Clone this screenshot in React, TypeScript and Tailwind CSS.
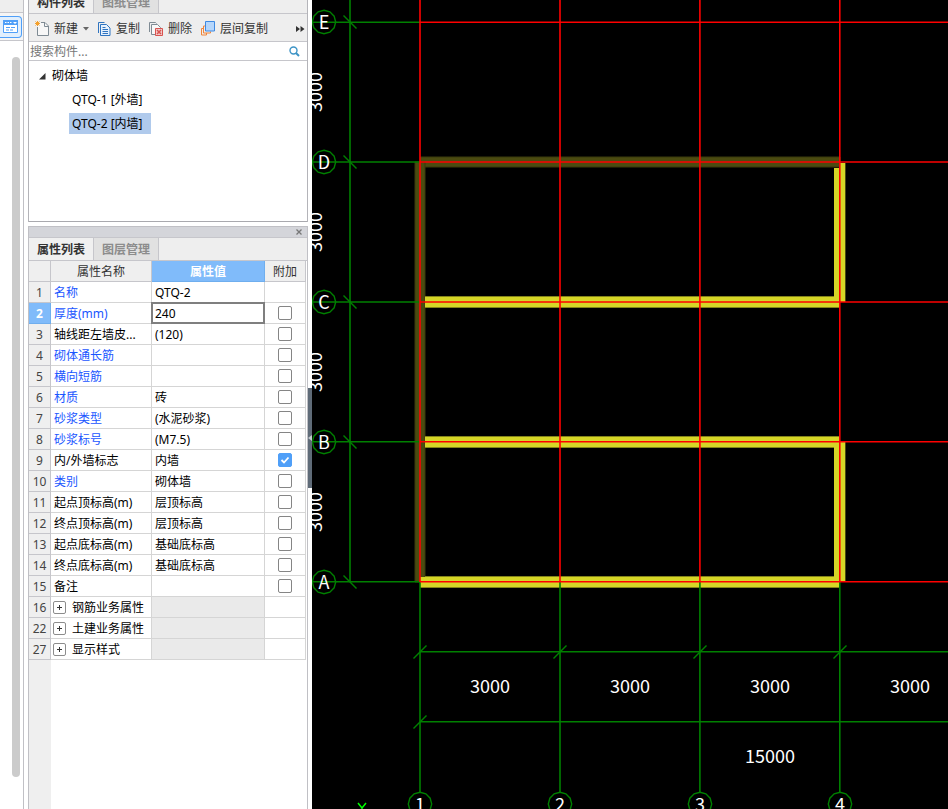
import { useState } from "react";

type Property = {
  no: number;
  name: string;
  value?: string;
  blue?: boolean;
  group?: boolean;
  check?: boolean;
};

const properties: Property[] = [
  { no: 1, name: "名称", value: "QTQ-2", blue: true },
  { no: 2, name: "厚度(mm)", value: "240", blue: true, check: true },
  { no: 3, name: "轴线距左墙皮...", value: "(120)", check: true },
  { no: 4, name: "砌体通长筋", blue: true, check: true },
  { no: 5, name: "横向短筋", blue: true, check: true },
  { no: 6, name: "材质", value: "砖", blue: true, check: true },
  { no: 7, name: "砂浆类型", value: "(水泥砂浆)", blue: true, check: true },
  { no: 8, name: "砂浆标号", value: "(M7.5)", blue: true, check: true },
  { no: 9, name: "内/外墙标志", value: "内墙", check: true },
  { no: 10, name: "类别", value: "砌体墙", blue: true, check: true },
  { no: 11, name: "起点顶标高(m)", value: "层顶标高", check: true },
  { no: 12, name: "终点顶标高(m)", value: "层顶标高", check: true },
  { no: 13, name: "起点底标高(m)", value: "基础底标高", check: true },
  { no: 14, name: "终点底标高(m)", value: "基础底标高", check: true },
  { no: 15, name: "备注", check: true },
  { no: 16, name: "钢筋业务属性", group: true },
  { no: 22, name: "土建业务属性", group: true },
  { no: 27, name: "显示样式", group: true },
];

function NewIcon() {
  return (
    <svg width="14" height="15" viewBox="0 0 14 15" fill="none">
      <path d="M6 1.5h4l3.500 3.500v9.500H2.500V6" fill="#f7f7f7" stroke="#7f8b94" />
      <path d="M9.500 1.500V5.500h4" stroke="#7f8b94" />
      <path d="M2.500 0v5M0 2.500h5M.5.5l4 4M4.500.5l-4 4" stroke="#f5a12c" />
    </svg>
  );
}

function CopyIcon() {
  return (
    <svg width="13" height="14" viewBox="0 0 13 14" fill="none">
      <path d="M.5 11V.5h6" stroke="#2f74c0" />
      <path d="M2.500 2.500h6l3.500 3.500v7.500H2.500z" fill="#e6f1fd" stroke="#2f74c0" />
      <path d="M4.500 5.500h3M4.500 7.500h5.500M4.500 9.500h5.500M4.500 11.500h5.500" stroke="#2f74c0" />
    </svg>
  );
}

function DeleteIcon() {
  return (
    <svg width="14" height="14" viewBox="0 0 14 14" fill="none">
      <path d="M.5 10V.5h6l1 1" stroke="#7f8b94" />
      <path d="M6 12.500H2.500v-10h6l3 3V7" stroke="#7f8b94" fill="#f7f7f7" />
      <path d="M6.500 6.500h7v7h-7z" fill="#f3c9c9" stroke="#d9534f" />
      <path d="M8 8l4 4M12 8l-4 4" stroke="#d9534f" strokeWidth="1.500" />
    </svg>
  );
}

function LayerCopyIcon() {
  return (
    <svg width="14" height="15" viewBox="0 0 14 15" fill="none">
      <path d="M2 7.500H.5v6.500h5v-2" stroke="#f0853a" />
      <path d="M4.500 5H2.500v7h7v-1.500" stroke="#f0853a" />
      <path d="M4.500.5h9v9.500h-9z" fill="#b5d6fb" stroke="#3f8ae2" />
    </svg>
  );
}

function Tabs({ tabs }: { tabs: string[] }) {
  return (
    <div className="flex h-[23px] w-full shrink-0 border-b border-[#c6c6cb] bg-[#eeeeee]">
      {tabs.map((tab, i) => (
        <button
          key={tab}
          className={
            i === 0
              ? "h-full border-r border-[#c6c6cb] bg-[#f0f0f0] px-2 pt-0.5 font-bold text-[#333]"
              : "h-full border-r border-[#c6c6cb] bg-[#e1e1e1] px-2 pt-0.5 font-bold text-[#8c8c8c]"
          }
        >
          {tab}
        </button>
      ))}
    </div>
  );
}

function Toolbar() {
  return (
    <div className="flex h-7 shrink-0 items-center gap-[9px] border-b border-[#c6c6cb] bg-[#eeeeee] pt-0.5 pr-0.5 pl-1.5 text-[#333]">
      <button className="flex items-center gap-[5px] whitespace-nowrap">
        <NewIcon />
        新建
        <svg width="6" height="4" viewBox="0 0 6 4">
          <path d="M0 0h6L3 3.500z" fill="#666" />
        </svg>
      </button>
      <button className="flex items-center gap-[5px] whitespace-nowrap">
        <CopyIcon />
        复制
      </button>
      <button className="flex items-center gap-[5px] whitespace-nowrap">
        <DeleteIcon />
        删除
      </button>
      <button className="flex items-center gap-[5px] whitespace-nowrap">
        <LayerCopyIcon />
        层间复制
      </button>
      <button aria-label="更多" className="ml-auto">
        <svg width="9" height="6" viewBox="0 0 9 6" fill="#333">
          <path d="M0 0l4 3-4 3zM4.500 0l4 3-4 3z" />
        </svg>
      </button>
    </div>
  );
}

function ComponentTree() {
  return (
    <div className="h-[161px] shrink-0 border-b border-[#a9a9ae] bg-white pt-0.5 text-black">
      <div className="flex h-6 items-center gap-1.5 pt-0.5 pl-[10px]">
        <svg width="7" height="7" viewBox="0 0 7 7">
          <path d="M6.500 0v6.500H0z" fill="#333" />
        </svg>
        砌体墙
      </div>
      <div className="flex h-6 items-center pl-10">
        <button className="h-[21px] w-[82px] px-[3px] pt-0.5 text-left whitespace-nowrap">QTQ-1 [外墙]</button>
      </div>
      <div className="flex h-6 items-center pl-10">
        <button className="h-[21px] w-[82px] bg-[#b0caec] px-[3px] pt-0.5 text-left whitespace-nowrap">QTQ-2 [内墙]</button>
      </div>
    </div>
  );
}

function PropertyTable() {
  const [thickness, setThickness] = useState("240");
  const [checked, setChecked] = useState<number[]>([9]);

  const toggle = (no: number) =>
    setChecked((list) => (list.includes(no) ? list.filter((n) => n !== no) : [...list, no]));

  return (
    <table className="w-[277px] table-fixed border-separate border-spacing-0 text-left">
      <colgroup>
        <col className="w-[22px]" />
        <col className="w-[101px]" />
        <col className="w-[113px]" />
        <col className="w-[41px]" />
      </colgroup>
      <thead>
        <tr className="h-[21px] bg-[#efefef] text-center text-[#333]">
          <th className="border-r border-b border-[#c6c6cb] p-0" />
          <th className="border-r border-b border-[#c6c6cb] p-0 pt-0.5 font-normal">属性名称</th>
          <th className="border-r border-b border-[#6faeee] bg-[#80bbfa] p-0 pt-0.5 font-bold text-white">属性值</th>
          <th className="border-r border-b border-[#c6c6cb] p-0 pt-0.5 font-normal">附加</th>
        </tr>
      </thead>
      <tbody>
        {properties.map((p) => (
          <tr key={p.no} className="h-[21px]">
            <th
              className={
                p.no === 2
                  ? "border-r border-b border-[#6faeee] bg-[#80bbfa] p-0 pt-0.5 text-center font-bold text-white"
                  : "border-r border-b border-[#c6c6cb] bg-[#efefef] p-0 pt-0.5 text-center font-normal text-[#444]"
              }
            >
              {p.no}
            </th>
            <td className="border-r border-b border-[#d5d5d5] p-0">
              {p.group ? (
                <button className="flex items-center gap-1.5 pl-0.5 whitespace-nowrap text-black">
                  <svg width="13" height="13" viewBox="0 0 13 13" fill="none">
                    <rect x=".5" y=".5" width="12" height="12" rx="1.500" fill="#fff" stroke="#8c8c8c" />
                    <path d="M4 6.500h5M6.500 4v5" stroke="#333" />
                  </svg>
                  <span className="pt-0.5">{p.name}</span>
                </button>
              ) : (
                <div
                  className={
                    p.blue
                      ? "pt-0.5 pl-[3px] whitespace-nowrap text-[#1a56ff]"
                      : "pt-0.5 pl-[3px] whitespace-nowrap text-black"
                  }
                >
                  {p.name}
                </div>
              )}
            </td>
            <td
              className={
                p.group
                  ? "border-r border-b border-[#d5d5d5] bg-[#eaeaea] p-0"
                  : "border-r border-b border-[#d5d5d5] p-0 text-black"
              }
            >
              {p.no === 2 ? (
                <input
                  aria-label={p.name}
                  value={thickness}
                  onChange={(e) => setThickness(e.target.value)}
                  className="block h-5 w-full bg-white pl-[3px] outline-2 -outline-offset-1 outline-[#7f7f7f]"
                />
              ) : (
                <div className="pt-0.5 pl-[3px] whitespace-nowrap">{p.value}</div>
              )}
            </td>
            <td className="border-r border-b border-[#d5d5d5] p-0">
              {p.check && (
                <label className="relative mx-auto block h-[14px] w-[14px]">
                  <input
                    type="checkbox"
                    aria-label={p.name}
                    checked={checked.includes(p.no)}
                    onChange={() => toggle(p.no)}
                    className="block h-[14px] w-[14px] appearance-none rounded-xs border border-[#858585] bg-white checked:border-[#4f9ff8] checked:bg-[#4f9ff8]"
                  />
                  {checked.includes(p.no) && (
                    <svg className="pointer-events-none absolute inset-0" width="14" height="14" viewBox="0 0 14 14" fill="none">
                      <path d="M3.500 7l2.500 2.500 4.500-5" stroke="#fff" strokeWidth="1.800" />
                    </svg>
                  )}
                </label>
              )}
            </td>
          </tr>
        ))}
      </tbody>
    </table>
  );
}

function SidePanel() {
  return (
    <aside className="flex w-[280px] shrink-0 flex-col text-xs leading-4">
      <div className="flex shrink-0 flex-col border-x border-[#b4b4b9]">
        <div className="flex h-[14px] items-end overflow-hidden">
          <Tabs tabs={["构件列表", "图纸管理"]} />
        </div>
        <Toolbar />
        <label className="flex h-[19px] shrink-0 items-center border-b border-[#c6c6cb] bg-white pr-[7px] pl-px">
          <input
            aria-label="搜索构件"
            placeholder="搜索构件..."
            className="h-[18px] min-w-0 flex-1 outline-none placeholder:text-[#777]"
          />
          <svg width="11" height="11" viewBox="0 0 11 11" fill="none" stroke="#3d94c6">
            <circle cx="4.500" cy="4.500" r="3.500" strokeWidth="1.400" />
            <path d="M7 7l3 3" strokeWidth="2" />
          </svg>
        </label>
        <ComponentTree />
      </div>
      <div className="mt-1 flex min-h-0 flex-1 flex-col border-x border-t border-[#c0c0c5]">
        <div className="flex h-[11px] shrink-0 items-center justify-end border-b border-[#c6c6cb] bg-[#d4d5da] pr-[5px]">
          <button aria-label="关闭">
            <svg width="6" height="6" viewBox="0 0 6 6" stroke="#777" strokeWidth="1.300">
              <path d="M.5.5l5 5M5.500.5l-5 5" />
            </svg>
          </button>
        </div>
        <Tabs tabs={["属性列表", "图层管理"]} />
        <PropertyTable />
        <div className="w-[22px] flex-1 bg-[#efefef]" />
      </div>
    </aside>
  );
}

// "line" is where the axis itself is stroked, "y" / "x" where its marks are centred
const rows = [
  { label: "E", y: 22, line: 22.2 },
  { label: "D", y: 162, line: 162 },
  { label: "C", y: 302, line: 302 },
  { label: "B", y: 442, line: 441.8 },
  { label: "A", y: 582, line: 581.8 },
];

const cols = [
  { label: "1", x: 108, line: 108 },
  { label: "2", x: 248, line: 248 },
  { label: "3", x: 388, line: 387.9 },
  { label: "4", x: 528, line: 527.8 },
];

function Bubble({ x, y, label }: { x: number; y: number; label: string }) {
  const points = Array.from({ length: 12 }, (_, i) => {
    const a = (i * Math.PI) / 6;
    return `${x + 11.7 * Math.sin(a)},${y - 11.7 * Math.cos(a)}`;
  }).join(" ");
  return (
    <g>
      <polygon points={points} fill="none" stroke="#008000" strokeWidth="1.400" />
      <text x={x} y={y + 7} textAnchor="middle">
        {label}
      </text>
    </g>
  );
}

function Drawing() {
  return (
    <main className="min-w-0 flex-1 overflow-hidden bg-black">
      <svg
        className="block h-full w-full font-['Noto_Sans_CJK_SC','Noto_Sans',sans-serif] text-[18px]"
        fill="#fff"
        role="img"
        aria-label="轴网平面图"
      >
        {/* outer walls */}
        <g fill="#4b4b10" stroke="#3a3a0c">
          <path d="M108.500 157h419.500v10H108.500z" />
          <path d="M103 162h10v420h-10z" />
        </g>
        {/* inner walls */}
        <g fill="#d6d626">
          <path d="M113 297h415v10H113zM113 437h415v10H113zM108 577h420v10H108z" />
          <path d="M522 168h6v-5h5v139h-11zM522 442h11v140h-11z" />
        </g>
        <path
          d="M113 296.500h409M113 307.500h415M113 436.500h415M113 447.500h409M113 576.500h409M108 587.500h420"
          stroke="#85851a"
        />
        <path d="M533.500 163v139M533.500 442v140" stroke="#4b4b10" />

        {/* axes */}
        <g stroke="#008000" strokeWidth="1.600">
          {rows.map((r) => (
            <path key={r.label} d={`M0 ${r.line}H108`} />
          ))}
          {cols.map((c) => (
            <path key={c.label} d={`M${c.line} 582V792`} />
          ))}
          <path d="M38 0V582" />
          <path d="M108 651.800H4000M108 721.800H4000" />
        </g>
        <g stroke="#ff0000" strokeWidth="1.600">
          {rows.map((r) => (
            <path key={r.label} d={`M108 ${r.line}H4000`} />
          ))}
          {cols.map((c) => (
            <path key={c.label} d={`M${c.line} 0V582`} />
          ))}
        </g>

        {/* dimension ticks */}
        <g stroke="#008000" strokeWidth="1.400">
          {rows.map((r) => (
            <path key={r.label} d={`M31.500 ${r.y - 6.5}l13 13`} />
          ))}
          {cols.map((c) => (
            <path key={c.label} d={`M${c.x - 6.5} 658.500l13-13`} />
          ))}
          <path d="M101.500 728.500l13-13" />
        </g>

        {rows.map((r) => (
          <Bubble key={r.label} x={12} y={r.y} label={r.label} />
        ))}
        {cols.map((c) => (
          <Bubble key={c.label} x={c.x} y={804} label={c.label} />
        ))}
        {[92, 232, 372, 512].map((y) => (
          <text key={y} transform={`translate(10 ${y}) rotate(-90)`} textAnchor="middle">
            3000
          </text>
        ))}
        {[178, 318, 458, 598].map((x) => (
          <text key={x} x={x} y="693" textAnchor="middle">
            3000
          </text>
        ))}
        <text x="458" y="763" textAnchor="middle">
          15000
        </text>
        <path d="M46 803l4 5 4-5M50 808v8" stroke="#00ff00" strokeWidth="1.500" fill="none" />
      </svg>
    </main>
  );
}

export default function App() {
  return (
    <div className="flex h-screen overflow-hidden bg-white font-['Noto_Sans','Noto_Sans_CJK_SC',sans-serif]">
      <nav className="mr-1 flex w-6 shrink-0 flex-col border-r border-[#c0c0c5]">
        <div className="h-[13px] shrink-0 border-b border-[#c6c6cb] bg-[#eeeeee]" />
        <div className="flex h-7 shrink-0 items-center border-b border-[#c6c6cb] bg-[#f5f5f5]">
          <button
            aria-label="视图"
            className="flex h-[22px] w-[22px] items-center justify-center rounded-r border border-l-0 border-[#4f9ff8] bg-[#e1effd]"
          >
            <svg width="15" height="13" viewBox="0 0 15 13" fill="none">
              <path d="M.5.5h14v12H.5z" fill="#fff" stroke="#4f9ff8" />
              <path d="M0 0h15v5H0z" fill="#4f9ff8" />
              <path d="M2 2.500h1.500M4.500 2.500H6M7 2.500h1.500" stroke="#fff" />
              <path d="M10 2h4l-2 2z" fill="#fff" />
              <path d="M3 7.500h4M8 7.500h4M3 10h3M7 10h3" stroke="#4f9ff8" />
            </svg>
          </button>
        </div>
        <div className="mt-4 mb-8 ml-3 w-2 flex-1 rounded-full bg-[#cbcbcb]" />
      </nav>
      <SidePanel />
      <div className="flex w-1 shrink-0 flex-col justify-center pt-[67px]">
        <button aria-label="收起" className="flex h-[100px] w-1 items-center bg-[#5f6b78]">
          <svg width="4" height="6" viewBox="0 0 4 6">
            <path d="M4 0v6L0 3z" fill="#c5cad0" />
          </svg>
        </button>
      </div>
      <Drawing />
    </div>
  );
}
